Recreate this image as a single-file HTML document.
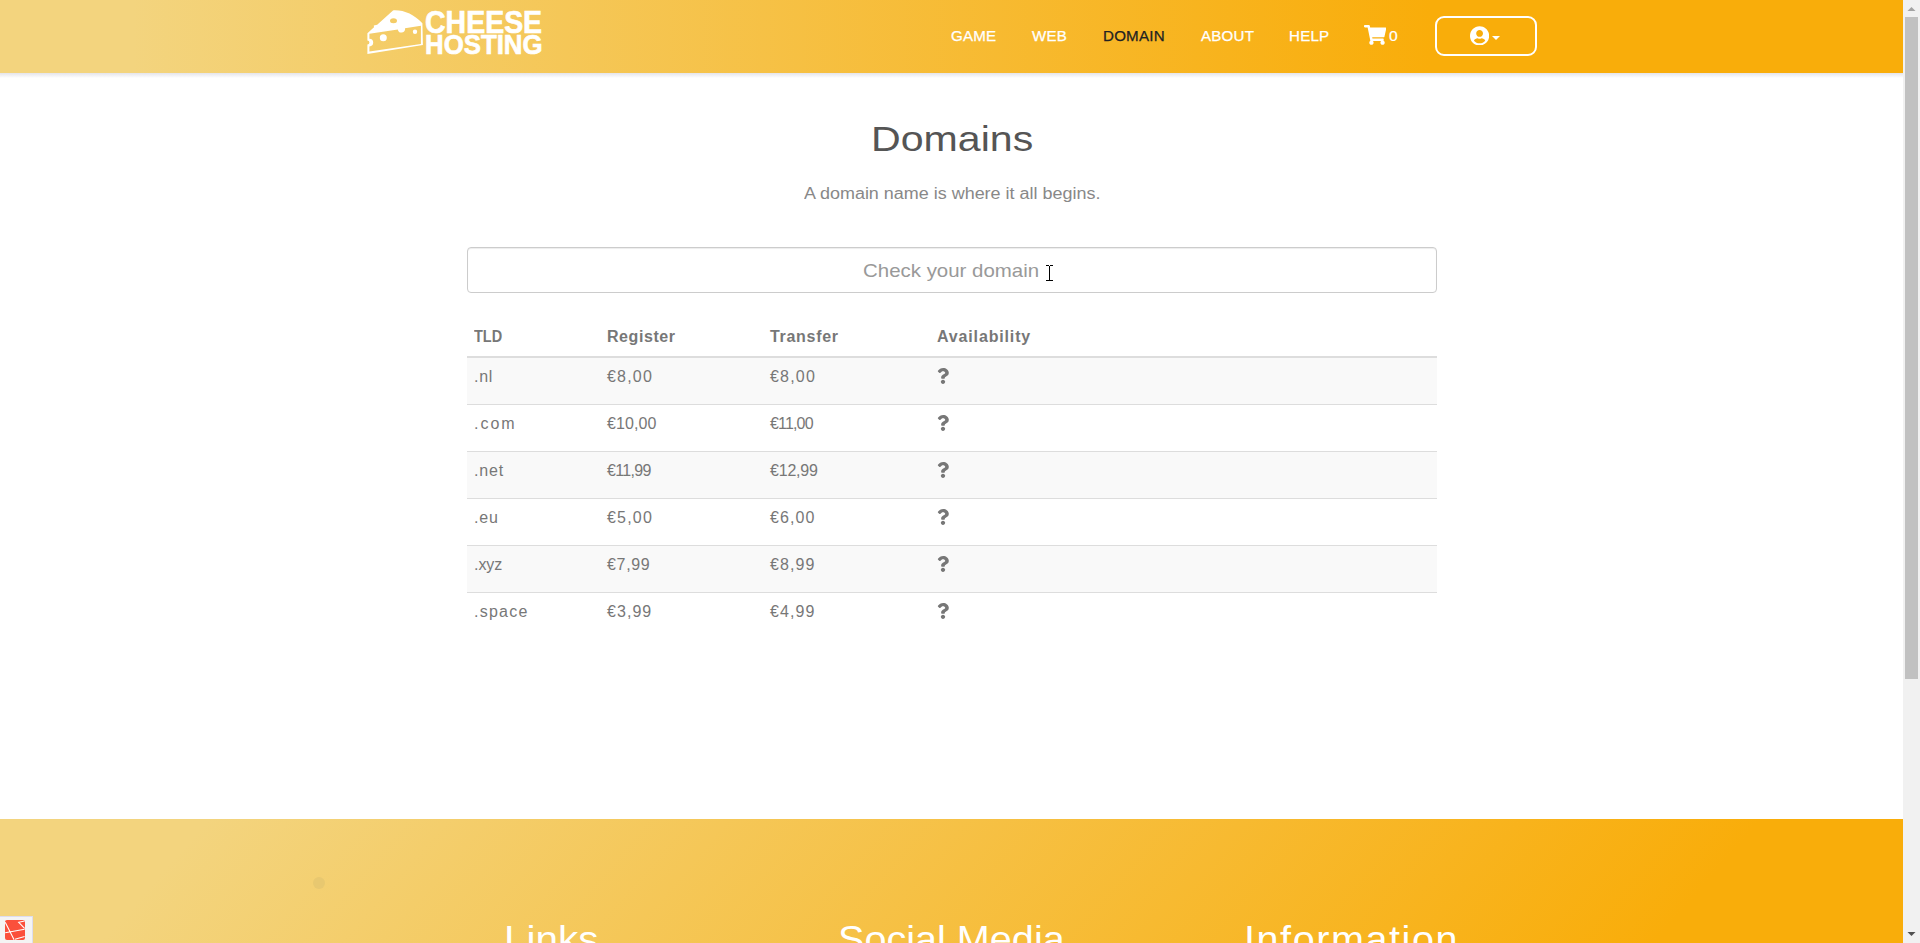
<!DOCTYPE html>
<html><head><meta charset="utf-8">
<style>
html,body{margin:0;padding:0;width:1920px;height:943px;overflow:hidden;background:#fff;font-family:"Liberation Sans",sans-serif;}
.a{position:absolute;white-space:nowrap;line-height:1;}
#hdr{position:absolute;left:0;top:0;width:1903px;height:73px;
 background:linear-gradient(90deg,#f3d47e 133px,#f9ad0a 1430px);}
#shadow{position:absolute;left:0;top:73px;width:1903px;height:5px;background:linear-gradient(#e4e4ea,#fff);}
.nav{color:#fff;font-size:14px;top:29px;letter-spacing:0.2px;transform:scaleX(1.08);transform-origin:0 0;-webkit-text-stroke:0.25px currentColor;}
#ftr{position:absolute;left:0;top:819px;width:1903px;height:124px;overflow:hidden;
 background:linear-gradient(131deg,#f3d47e 157px,#f9ad0a 1330px);}
.fh{color:#fff;font-size:36px;top:922px;transform-origin:0 0;}
#sb{position:absolute;left:1903px;top:0;width:17px;height:943px;background:#f1f1f1;}
#thumb{position:absolute;left:1905px;top:17px;width:13px;height:662px;background:#c1c1c1;}
.th{font-weight:bold;color:#777;font-size:16px;top:329px;}
.td{color:#777;font-size:16px;}
.row{position:absolute;left:467px;width:970px;height:46px;}
.bd{position:absolute;left:467px;width:970px;height:1px;background:#ddd;}
.q{position:absolute;font-weight:bold;color:#777;font-size:21px;}
</style></head><body>
<div id="hdr"></div>
<div id="shadow"></div>

<!-- logo -->
<svg class="a" style="left:0;top:0" width="600" height="73" viewBox="0 0 600 73">
 <path fill="#fff" fill-rule="evenodd" d="M367.4,33.2 L374,27.2 L373.8,25.6 L377.2,24.8 L393,10.4 C404,9.8 414,14.5 422.4,23.3 L422.9,45.1 L367.4,54 L367.4,44.6 A2,2 0 0,0 367.4,40.6 Z
 M369.4,33.7 L397.8,29.5 A3.6,3.6 0 0,0 405,28.3 L420.9,25.8 L420.9,44.1 L369.4,51.5 L369.4,46.4 A3.8,3.8 0 0,0 369.4,38.8 Z
 M379.8,37.7 a3.5,3.5 0 1,0 7,0 a3.5,3.5 0 1,0 -7,0 Z
 M412.8,31.7 a2.2,2.2 0 1,0 4.4,0 a2.2,2.2 0 1,0 -4.4,0 Z
 M390,20.8 a3.5,2.5 0 1,0 7,0 a3.5,2.5 0 1,0 -7,0 Z"/>
</svg>
<div class="a" id="lg1" style="left:424.5px;top:6px;font-size:32px;font-weight:bold;color:#fff;-webkit-text-stroke:0.7px #fff;transform:scaleX(0.89);transform-origin:0 0">CHEESE</div>
<div class="a" id="lg2" style="left:424.5px;top:29.5px;font-size:28.5px;font-weight:bold;color:#fff;-webkit-text-stroke:0.7px #fff;transform:scaleX(0.905);transform-origin:0 0">HOSTING</div>

<div class="a nav" id="n1" style="left:951px">GAME</div>
<div class="a nav" id="n2" style="left:1032px">WEB</div>
<div class="a nav" id="n3" style="left:1103px;color:#222">DOMAIN</div>
<div class="a nav" id="n4" style="left:1201px">ABOUT</div>
<div class="a nav" id="n5" style="left:1289px">HELP</div>
<!-- cart -->
<svg class="a" style="left:1364.2px;top:25.2px" width="22.3" height="19.8" viewBox="0 0 576 512"><path fill="#fff" d="M528.12 301.319l47.273-208C578.806 78.301 567.391 64 552.005 64H159.208l-9.166-44.810C147.758 8.021 137.930 0 126.529 0H24C10.745 0 0 10.745 0 24v16c0 13.255 10.745 24 24 24h69.883l70.248 343.435C147.325 417.100 136 435.222 136 456c0 30.928 25.072 56 56 56s56-25.072 56-56c0-15.674-6.447-29.835-16.824-40h209.647C430.447 426.165 424 440.326 424 456c0 30.928 25.072 56 56 56s56-25.072 56-56c0-22.172-12.888-41.332-31.579-50.405l5.517-24.276c3.413-15.018-8.002-29.319-23.403-29.319H218.117l-6.545-32h293.145c11.206 0 20.920-7.754 23.403-18.681z"/></svg>
<div class="a nav" id="n6" style="left:1389.3px;font-size:14px;top:29px;transform:scaleX(1.12);transform-origin:0 0;-webkit-text-stroke:0.2px #fff">0</div>
<div class="a" style="left:1435px;top:16px;width:98px;height:36px;border:2px solid #fff;border-radius:9px;"></div>
<svg class="a" style="left:1470.3px;top:25.7px" width="19.2" height="19.8" viewBox="0 0 496 512"><path fill="#fff" d="M248 8C111 8 0 119 0 256s111 248 248 248 248-111 248-248S385 8 248 8zm0 96c48.6 0 88 39.4 88 88s-39.4 88-88 88-88-39.4-88-88 39.4-88 88-88zm0 344c-58.7 0-111.3-26.6-146.5-68.2 18.8-35.4 55.6-59.8 98.5-59.8 2.4 0 4.8.4 7.1 1.1 13 4.2 26.6 6.9 40.9 6.9 14.3 0 28-2.7 40.9-6.9 2.3-.7 4.7-1.1 7.1-1.1 42.9 0 79.7 24.4 98.5 59.8C359.3 421.4 306.7 448 248 448z"/></svg>
<svg class="a" style="left:1490px;top:34px" width="12" height="8" viewBox="0 0 12 8"><path d="M2,2 H10 L6,6 Z" fill="#fff"/></svg>

<div class="a" id="title" style="left:870.5px;top:121px;font-size:35px;color:#555;transform:scaleX(1.175);transform-origin:0 0">Domains</div>
<div class="a" id="sub" style="left:803.5px;top:186px;font-size:16px;color:#888;transform:scaleX(1.122);transform-origin:0 0">A domain name is where it all begins.</div>

<div class="a" style="left:467px;top:247px;width:968px;height:44px;border:1px solid #ccc;border-radius:4px;box-shadow:inset 0 1px 1px rgba(0,0,0,.075)"></div>
<div class="a" id="ph" style="left:863px;top:261px;font-size:19px;color:#999;transform:scaleX(1.076);transform-origin:0 0">Check your domain</div>
<!-- I-beam cursor -->
<svg class="a" style="left:1045px;top:264px" width="9" height="18" viewBox="0 0 9 18" shape-rendering="crispEdges">
 <rect x="1" y="1" width="3" height="1" fill="#000"/><rect x="5" y="1" width="3" height="1" fill="#000"/>
 <rect x="4" y="1.5" width="1" height="15" fill="#000"/>
 <rect x="1" y="16" width="3" height="1" fill="#000"/><rect x="5" y="16" width="3" height="1" fill="#000"/>
</svg>

<div class="a th" id="h1" style="left:474px;transform:scaleX(0.905);transform-origin:0 0">TLD</div>
<div class="a th" id="h2" style="left:607px;letter-spacing:0.57px">Register</div>
<div class="a th" id="h3" style="left:770px;letter-spacing:0.7px">Transfer</div>
<div class="a th" id="h4" style="left:937px;letter-spacing:0.85px">Availability</div>
<div class="bd" style="top:356px;height:2px"></div>

<div class="row" style="top:358px;background:#f9f9f9"></div>
<div class="bd" style="top:404px"></div>
<div class="bd" style="top:451px"></div>
<div class="row" style="top:452px;background:#f9f9f9"></div>
<div class="bd" style="top:498px"></div>
<div class="bd" style="top:545px"></div>
<div class="row" style="top:546px;background:#f9f9f9"></div>
<div class="bd" style="top:592px"></div>

<div class="a td" id="r0a" style="letter-spacing:0.7px;left:474px;top:369px">.nl</div>
<div class="a td" id="r0b" style="letter-spacing:1.2px;left:607px;top:369px">€8,00</div>
<div class="a td" id="r0c" style="letter-spacing:1.2px;left:770px;top:369px">€8,00</div>
<svg class="a" style="left:937.2px;top:368px" width="12" height="16" viewBox="0 0 384 512"><path fill="#777" d="M202.021 0C122.202 0 70.503 32.703 29.914 91.026c-7.363 10.580-5.093 25.086 5.178 32.874l43.138 32.709c10.373 7.865 25.132 6.026 33.253-4.148 25.049-31.381 43.630-49.449 82.757-49.449 30.764 0 68.816 19.799 68.816 49.631 0 22.552-18.617 34.134-48.993 51.164-35.423 19.861-82.299 44.576-82.299 106.405V320c0 13.255 10.745 24 24 24h72.471c13.255 0 24-10.745 24-24v-5.773c0-42.860 125.268-44.645 125.268-160.627C377.504 66.256 286.902 0 202.021 0zM192 373.459c-38.196 0-69.271 31.075-69.271 69.271 0 38.195 31.075 69.270 69.271 69.270s69.271-31.075 69.271-69.271-31.075-69.270-69.271-69.270z"/></svg>
<div class="a td" id="r1a" style="letter-spacing:1.97px;left:474px;top:416px">.com</div>
<div class="a td" id="r1b" style="letter-spacing:0.08px;left:607px;top:416px">€10,00</div>
<div class="a td" id="r1c" style="letter-spacing:-0.84px;left:770px;top:416px">€11,00</div>
<svg class="a" style="left:937.2px;top:415px" width="12" height="16" viewBox="0 0 384 512"><path fill="#777" d="M202.021 0C122.202 0 70.503 32.703 29.914 91.026c-7.363 10.580-5.093 25.086 5.178 32.874l43.138 32.709c10.373 7.865 25.132 6.026 33.253-4.148 25.049-31.381 43.630-49.449 82.757-49.449 30.764 0 68.816 19.799 68.816 49.631 0 22.552-18.617 34.134-48.993 51.164-35.423 19.861-82.299 44.576-82.299 106.405V320c0 13.255 10.745 24 24 24h72.471c13.255 0 24-10.745 24-24v-5.773c0-42.860 125.268-44.645 125.268-160.627C377.504 66.256 286.902 0 202.021 0zM192 373.459c-38.196 0-69.271 31.075-69.271 69.271 0 38.195 31.075 69.270 69.271 69.270s69.271-31.075 69.271-69.271-31.075-69.270-69.271-69.270z"/></svg>
<div class="a td" id="r2a" style="letter-spacing:0.83px;left:474px;top:463px">.net</div>
<div class="a td" id="r2b" style="letter-spacing:-0.65px;left:607px;top:463px">€11,99</div>
<div class="a td" id="r2c" style="letter-spacing:-0.2px;left:770px;top:463px">€12,99</div>
<svg class="a" style="left:937.2px;top:462px" width="12" height="16" viewBox="0 0 384 512"><path fill="#777" d="M202.021 0C122.202 0 70.503 32.703 29.914 91.026c-7.363 10.580-5.093 25.086 5.178 32.874l43.138 32.709c10.373 7.865 25.132 6.026 33.253-4.148 25.049-31.381 43.630-49.449 82.757-49.449 30.764 0 68.816 19.799 68.816 49.631 0 22.552-18.617 34.134-48.993 51.164-35.423 19.861-82.299 44.576-82.299 106.405V320c0 13.255 10.745 24 24 24h72.471c13.255 0 24-10.745 24-24v-5.773c0-42.860 125.268-44.645 125.268-160.627C377.504 66.256 286.902 0 202.021 0zM192 373.459c-38.196 0-69.271 31.075-69.271 69.271 0 38.195 31.075 69.270 69.271 69.270s69.271-31.075 69.271-69.271-31.075-69.270-69.271-69.270z"/></svg>
<div class="a td" id="r3a" style="letter-spacing:0.8px;left:474px;top:510px">.eu</div>
<div class="a td" id="r3b" style="letter-spacing:1.2px;left:607px;top:510px">€5,00</div>
<div class="a td" id="r3c" style="letter-spacing:1.1px;left:770px;top:510px">€6,00</div>
<svg class="a" style="left:937.2px;top:509px" width="12" height="16" viewBox="0 0 384 512"><path fill="#777" d="M202.021 0C122.202 0 70.503 32.703 29.914 91.026c-7.363 10.580-5.093 25.086 5.178 32.874l43.138 32.709c10.373 7.865 25.132 6.026 33.253-4.148 25.049-31.381 43.630-49.449 82.757-49.449 30.764 0 68.816 19.799 68.816 49.631 0 22.552-18.617 34.134-48.993 51.164-35.423 19.861-82.299 44.576-82.299 106.405V320c0 13.255 10.745 24 24 24h72.471c13.255 0 24-10.745 24-24v-5.773c0-42.860 125.268-44.645 125.268-160.627C377.504 66.256 286.902 0 202.021 0zM192 373.459c-38.196 0-69.271 31.075-69.271 69.271 0 38.195 31.075 69.270 69.271 69.270s69.271-31.075 69.271-69.271-31.075-69.270-69.271-69.270z"/></svg>
<div class="a td" id="r4a" style="letter-spacing:-0.05px;left:474px;top:557px">.xyz</div>
<div class="a td" id="r4b" style="letter-spacing:0.68px;left:607px;top:557px">€7,99</div>
<div class="a td" id="r4c" style="letter-spacing:1.1px;left:770px;top:557px">€8,99</div>
<svg class="a" style="left:937.2px;top:556px" width="12" height="16" viewBox="0 0 384 512"><path fill="#777" d="M202.021 0C122.202 0 70.503 32.703 29.914 91.026c-7.363 10.580-5.093 25.086 5.178 32.874l43.138 32.709c10.373 7.865 25.132 6.026 33.253-4.148 25.049-31.381 43.630-49.449 82.757-49.449 30.764 0 68.816 19.799 68.816 49.631 0 22.552-18.617 34.134-48.993 51.164-35.423 19.861-82.299 44.576-82.299 106.405V320c0 13.255 10.745 24 24 24h72.471c13.255 0 24-10.745 24-24v-5.773c0-42.860 125.268-44.645 125.268-160.627C377.504 66.256 286.902 0 202.021 0zM192 373.459c-38.196 0-69.271 31.075-69.271 69.271 0 38.195 31.075 69.270 69.271 69.270s69.271-31.075 69.271-69.271-31.075-69.270-69.271-69.270z"/></svg>
<div class="a td" id="r5a" style="letter-spacing:1.26px;left:474px;top:604px">.space</div>
<div class="a td" id="r5b" style="letter-spacing:1.05px;left:607px;top:604px">€3,99</div>
<div class="a td" id="r5c" style="letter-spacing:1.1px;left:770px;top:604px">€4,99</div>
<svg class="a" style="left:937.2px;top:603px" width="12" height="16" viewBox="0 0 384 512"><path fill="#777" d="M202.021 0C122.202 0 70.503 32.703 29.914 91.026c-7.363 10.580-5.093 25.086 5.178 32.874l43.138 32.709c10.373 7.865 25.132 6.026 33.253-4.148 25.049-31.381 43.630-49.449 82.757-49.449 30.764 0 68.816 19.799 68.816 49.631 0 22.552-18.617 34.134-48.993 51.164-35.423 19.861-82.299 44.576-82.299 106.405V320c0 13.255 10.745 24 24 24h72.471c13.255 0 24-10.745 24-24v-5.773c0-42.860 125.268-44.645 125.268-160.627C377.504 66.256 286.902 0 202.021 0zM192 373.459c-38.196 0-69.271 31.075-69.271 69.271 0 38.195 31.075 69.270 69.271 69.270s69.271-31.075 69.271-69.271-31.075-69.270-69.271-69.270z"/></svg>

<div id="ftr"></div>
<div class="a" style="left:313px;top:877px;width:12px;height:12px;border-radius:50%;background:#e8c870"></div>
<div class="a fh" id="f1" style="left:504px;transform:scaleX(1.125)">Links</div>
<div class="a fh" id="f2" style="left:838px;transform:scaleX(1.10)">Social Media</div>
<div class="a fh" id="f3" style="left:1244px;letter-spacing:1.4px;transform:scaleX(1.1)">Information</div>

<div class="a" style="left:0;top:916px;width:32px;height:27px;background:#f4f4f4;border-right:1px solid #dde;border-top:1px solid #dde"></div>
<svg class="a" style="left:4px;top:919px" width="22" height="22" viewBox="0 0 22 22">
 <rect x="1" y="1" width="20" height="20" rx="2" fill="#fb503b"/>
 <path d="M1.2,3.3 L10.1,20.7 M1.2,13.8 L20.6,10.2 M20.6,2 L14.7,3.3 L20.6,9.3 M11,20.2 L20.6,17.5" stroke="#fff" stroke-width="1.1" fill="none"/>
</svg>

<div id="sb"></div>
<div id="thumb"></div>
<svg class="a" style="left:1903px;top:0" width="17" height="943" viewBox="0 0 17 943">
 <path d="M4.5,11 L8.5,7 L12.5,11 Z" fill="#a3a3a3"/>
 <path d="M4.5,932 L8.5,936 L12.5,932 Z" fill="#505050"/>
</svg>
</body></html>
